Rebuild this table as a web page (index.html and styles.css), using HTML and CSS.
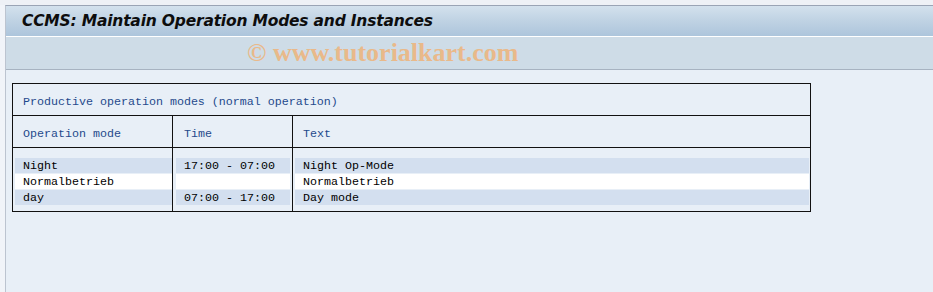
FILE: index.html
```html
<!DOCTYPE html>
<html>
<head>
<meta charset="utf-8">
<link rel="stylesheet" href="styles.css">
</head>
<body>
<div class="topgap"></div>
<div class="frame">
  <div class="titlebar"><h1 class="title">CCMS: Maintain Operation Modes and Instances</h1></div>
  <div class="toolbar"><span class="watermark">© www.tutorialkart.com</span></div>
  <div class="content">
    <div class="box">
      <div class="caption">Productive operation modes (normal operation)</div>
      <div class="grid head">
        <div class="col c1">Operation mode</div>
        <div class="col c2">Time</div>
        <div class="col c3">Text</div>
      </div>
      <div class="grid data">
        <div class="col c1">
          <div class="cell shade">Night</div>
          <div class="cell white">Normalbetrieb</div>
          <div class="cell shade">day</div>
        </div>
        <div class="col c2">
          <div class="cell shade">17:00 - 07:00</div>
          <div class="cell white"></div>
          <div class="cell shade">07:00 - 17:00</div>
        </div>
        <div class="col c3">
          <div class="cell shade">Night Op-Mode</div>
          <div class="cell white">Normalbetrieb</div>
          <div class="cell shade">Day mode</div>
        </div>
      </div>
    </div>
  </div>
</div>
</body>
</html>
```
FILE: styles.css
```css
html, body {
  margin: 0;
  padding: 0;
  height: 100%;
}
body {
  background: #f1f4f9;
  display: flex;
  flex-direction: column;
  overflow: hidden;
}
.topgap {
  height: 5px;
  flex: none;
  background: #eef1f6;
}
.frame {
  flex: 1;
  margin-left: 5px;
  border-left: 1px solid #bcc4d0;
  border-top: 1px solid #9aa4b5;
  display: flex;
  flex-direction: column;
}
.titlebar {
  height: 30px;
  flex: none;
  background: linear-gradient(to bottom, #d3e1ed 0%, #bfd2e3 50%, #adc5dc 100%);
  border-bottom: 1px solid #ffffff;
  display: flex;
  align-items: center;
  padding-left: 16px;
}
.title {
  margin: 0;
  font-family: "DejaVu Sans", sans-serif;
  font-weight: bold;
  font-style: italic;
  font-size: 15.5px;
  letter-spacing: -0.2px;
  color: #0d0d0d;
}
.toolbar {
  height: 32px;
  flex: none;
  background: #cedce7;
  border-bottom: 1px solid #a7b3c1;
  display: flex;
  align-items: center;
  padding-left: 241px;
}
.watermark {
  font-family: "Liberation Serif", serif;
  font-weight: bold;
  font-size: 26px;
  line-height: 30px;
  color: #e9b98a;
}
.content {
  flex: 1;
  background: #e8eff7;
  padding: 13px 0 0 6px;
}
.box {
  width: 797px;
  border: 1px solid #111;
  font-family: "Liberation Mono", monospace;
  font-size: 11.67px;
}
.caption {
  padding: 10px 0 5px 10px;
  line-height: 16px;
  color: #1f4a8c;
  border-bottom: 1px solid #111;
}
.grid {
  display: grid;
  grid-template-columns: 160px 120px 1fr;
}
.head {
  border-bottom: 1px solid #111;
  color: #1f4a8c;
}
.head .col {
  padding: 10px 0 5px 10px;
  line-height: 16px;
}
.head .c2 { padding-left: 11px; }
.c1, .c2 {
  border-right: 1px solid #111;
}
.data .col {
  padding: 10px 0 6px 0;
  display: flex;
  flex-direction: column;
  gap: 1px;
  color: #000;
}
.data .c1 { padding-left: 2px; }
.data .c2 { padding-left: 3px; padding-right: 2px; }
.data .c3 { padding-left: 2px; padding-right: 1px; }
.cell {
  height: 15px;
  line-height: 16px;
  padding-left: 8px;
  white-space: pre;
}
.shade { background: #d3dfef; }
.white { background: #ffffff; }
```
